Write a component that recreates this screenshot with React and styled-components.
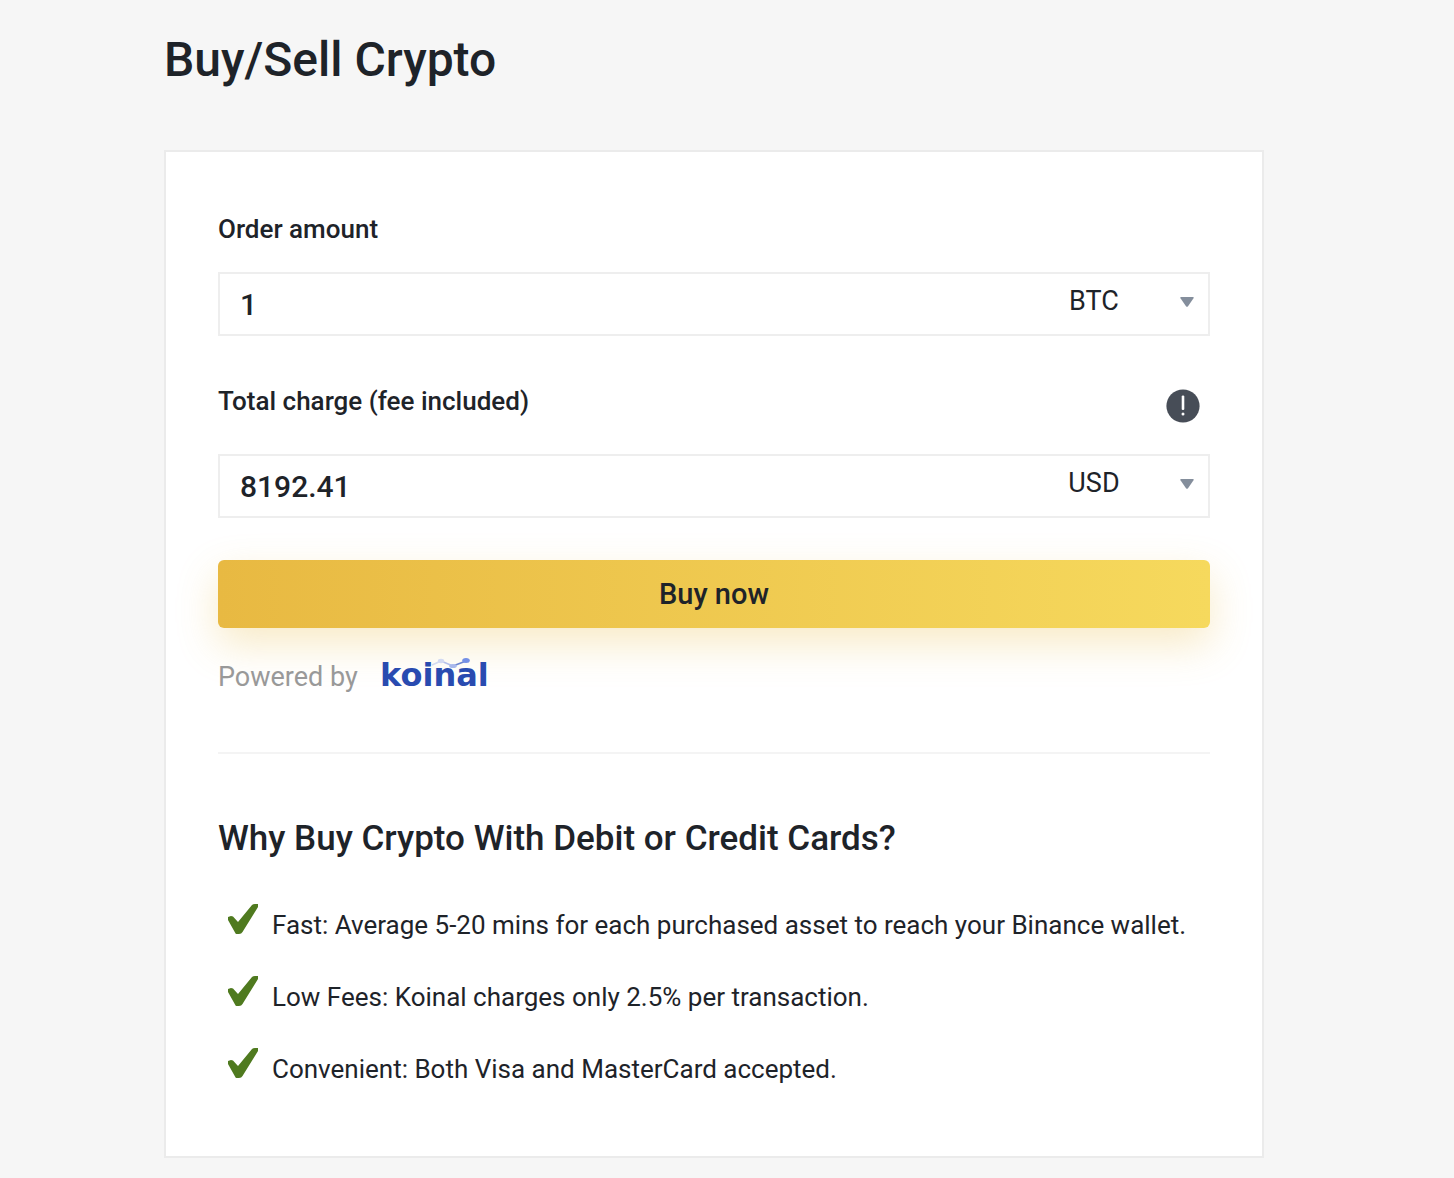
import React, {useState} from 'react';
import styled, {createGlobalStyle} from "styled-components";

const RATE = 8192.41

const reasons = [
    'Fast: Average 5-20 mins for each purchased asset to reach your Binance wallet.',
    'Low Fees: Koinal charges only 2.5% per transaction.',
    'Convenient: Both Visa and MasterCard accepted.',
]

const AmountField = ({id, selectLabel, value, onChange, options}) => {
    return (
        <Field>
            <AmountInput id={id} type="text" inputMode="decimal" value={value} onChange={onChange}/>
            <SelectBox>
                <CurrencySelect aria-label={selectLabel}>
                    {options.map(item => <option key={item}>{item}</option>)}
                </CurrencySelect>
                <Arrow viewBox="0 0 14 10" aria-hidden="true">
                    <path d="M1 0H13Q14.3 0 13.5 1.2L8 9.2Q7 10.5 6 9.2L.5 1.2Q-.3 0 1 0Z" fill="#848e9c"/>
                </Arrow>
            </SelectBox>
        </Field>
    )
}

const KoinalLogo = () => (
    <Logo viewBox="0 -3 124 44" role="img" aria-label="koinal">
        <path d="M52 7L61 3" stroke="#d3daf2" strokeWidth="1.6"/>
        <path d="M61 3L73 8" stroke="#b4c0ea" strokeWidth="1.6"/>
        <path d="M73 8L86 3" stroke="#6f87d0" strokeWidth="1.8"/>
        <ellipse cx="61" cy="3" rx="3.2" ry="2.2" fill="#d3daf2"/>
        <ellipse cx="73" cy="8" rx="3.8" ry="2.1" fill="#a9b8ec"/>
        <ellipse cx="86" cy="2.6" rx="3.8" ry="2.5" fill="#7590e6"/>
        <LogoText x="0" y="28">koinal</LogoText>
    </Logo>
)

const App = () => {
    const [amount, setAmount] = useState('1')
    const [total, setTotal] = useState(String(RATE))

    const amountHandler = (e) => {
        setAmount(e.target.value)
        setTotal(String(Number((Number(e.target.value) * RATE).toFixed(2)) || ''))
    }

    const totalHandler = (e) => {
        setTotal(e.target.value)
        setAmount(String(Number((Number(e.target.value) / RATE).toFixed(6)) || ''))
    }

    return (
        <Page>
            <GlobalStyle/>
            <Title>Buy/Sell Crypto</Title>
            <Card>
                <Form onSubmit={e => e.preventDefault()}>
                    <LabelRow>
                        <Label htmlFor="amount">Order amount</Label>
                    </LabelRow>
                    <AmountField id="amount" selectLabel="Crypto currency" value={amount}
                                 onChange={amountHandler} options={['BTC', 'ETH', 'BNB']}/>

                    <LabelRow $second>
                        <Label htmlFor="total">Total charge (fee included)</Label>
                        <InfoButton type="button" aria-label="Fee details">
                            <svg viewBox="0 0 34 34" width="34" height="34">
                                <circle cx="17" cy="17" r="16.6" fill="#474d57"/>
                                <rect x="15.7" y="6.5" width="2.6" height="14.5" rx="1.1" fill="#fff"/>
                                <circle cx="17" cy="25" r="1.5" fill="#fff"/>
                            </svg>
                        </InfoButton>
                    </LabelRow>
                    <AmountField id="total" selectLabel="Fiat currency" value={total}
                                 onChange={totalHandler} options={['USD', 'EUR']}/>

                    <BuyButton type="submit">Buy now</BuyButton>
                </Form>

                <Powered>
                    Powered by
                    <KoinalLogo/>
                </Powered>

                <Divider/>

                <SubTitle>Why Buy Crypto With Debit or Credit Cards?</SubTitle>
                <Reasons>
                    {reasons.map(item => (
                        <Reason key={item}>
                            <Check viewBox="0 0 32 32" aria-hidden="true">
                                <path d="M1 14L4 13L6 13.6L11 19L25 2Q26 1 28 1H31V4L15.5 29Q14.5 31 12 31H9.5Q8.7 31 8 29.5L1 17Z" fill="#4f7a1f"/>
                            </Check>
                            {item}
                        </Reason>
                    ))}
                </Reasons>
            </Card>
        </Page>
    );
};

export default App;

const GlobalStyle = createGlobalStyle`
  * {
    box-sizing: border-box;
  }
  body {
    margin: 0;
    background: #f6f6f6;
    color: #1e2329;
    font-family: Roboto, "Liberation Sans", sans-serif;
  }
  button, input, select {
    font-family: inherit;
    color: inherit;
  }
`

const Page = styled.main`
  padding: 32px 190px 20px 164px;
  @media (max-width: 1000px) {
    padding: 32px 20px 20px;
  }
`

const Title = styled.h1`
  margin: 0 0 62px;
  font-size: 48px;
  line-height: 56px;
  font-weight: 500;
`

const Card = styled.section`
  padding: 61px 52px 65px;
  background: #fff;
  border: 2px solid #ebebeb;
`

const Form = styled.form`
  display: flex;
  flex-direction: column;
`

const LabelRow = styled.div`
  display: flex;
  justify-content: space-between;
  align-items: flex-start;
  margin-top: ${props => props.$second ? '49px' : '0'};
  margin-bottom: ${props => props.$second ? '31px' : '27px'};
`

const Label = styled.label`
  font-size: 26px;
  line-height: 32px;
  font-weight: 500;
`

const InfoButton = styled.button`
  display: flex;
  margin: 4px 10px 0 0;
  padding: 0;
  border: none;
  background: none;
  cursor: pointer;
`

const Field = styled.div`
  display: flex;
  height: 64px;
  border: 2px solid #eeeeee;
`

const AmountInput = styled.input`
  flex: 1;
  min-width: 0;
  padding: 0 20px;
  border: none;
  outline: none;
  background: none;
  font-size: 30px;
  font-weight: 500;
`

const SelectBox = styled.div`
  display: grid;
  grid-template-columns: 160px;
  align-items: center;
`

const CurrencySelect = styled.select`
  grid-area: 1 / 1;
  height: 60px;
  padding: 0 68px 6px 0;
  appearance: none;
  border: none;
  outline: none;
  background: none;
  font-size: 27px;
  text-align: center;
  text-align-last: center;
`

const Arrow = styled.svg`
  grid-area: 1 / 1;
  justify-self: end;
  width: 14px;
  height: 10px;
  margin: 0 14px 4px 0;
  pointer-events: none;
`

const BuyButton = styled.button`
  height: 68px;
  margin-top: 42px;
  border: none;
  border-radius: 6px;
  background: linear-gradient(90deg, #e8b942, #f6d95d);
  box-shadow: 0 16px 40px rgba(232, 185, 66, 0.3);
  font-size: 29px;
  font-weight: 500;
  cursor: pointer;
`

const Powered = styled.div`
  display: flex;
  align-items: center;
  gap: 22px;
  margin-top: 27px;
  font-size: 27px;
  line-height: 40px;
  color: #999;
`

const Logo = styled.svg`
  width: 124px;
  height: 44px;
`

const LogoText = styled.text`
  font-family: "DejaVu Sans", sans-serif;
  font-size: 32px;
  font-weight: 700;
  fill: #294bb0;
`

const Divider = styled.hr`
  margin: 53px 0 63px;
  border: none;
  border-top: 2px solid #f4f4f4;
`

const SubTitle = styled.h2`
  margin: 0 0 42px;
  font-size: 35px;
  line-height: 44px;
  font-weight: 500;
`

const Reasons = styled.ul`
  display: flex;
  flex-direction: column;
  gap: 28px;
  margin: 0;
  padding: 0 0 0 9px;
  list-style: none;
`

const Reason = styled.li`
  display: flex;
  align-items: flex-start;
  gap: 13px;
  font-size: 26px;
  line-height: 44px;
`

const Check = styled.svg`
  flex: none;
  width: 32px;
  height: 32px;
`
